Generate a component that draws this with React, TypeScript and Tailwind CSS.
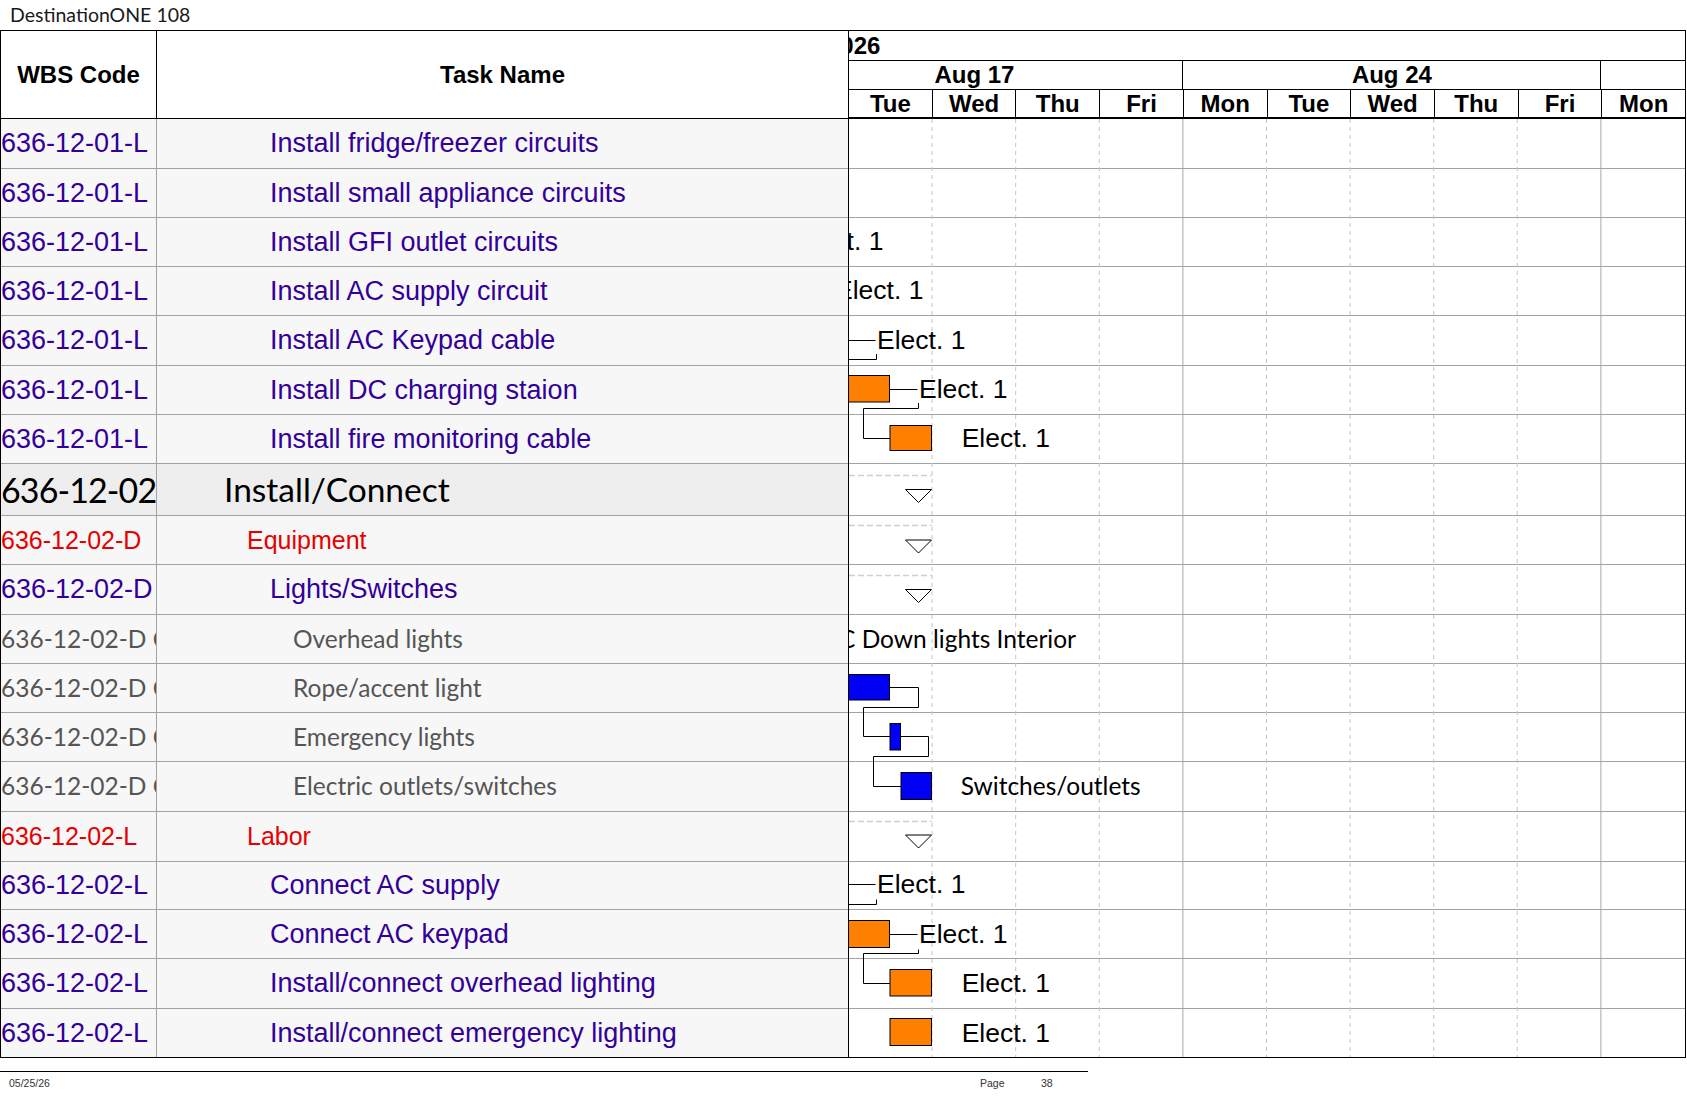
import React from "react";

type Kind = "task" | "summary" | "red" | "gray";

type Row = { wbs: string; name: string; kind: Kind; h: number };

const rows: Row[] = [
  { wbs: "636-12-01-L", name: "Install fridge/freezer circuits", kind: "task", h: 50 },
  { wbs: "636-12-01-L", name: "Install small appliance circuits", kind: "task", h: 49 },
  { wbs: "636-12-01-L", name: "Install GFI outlet circuits", kind: "task", h: 49 },
  { wbs: "636-12-01-L", name: "Install AC supply circuit", kind: "task", h: 49 },
  { wbs: "636-12-01-L", name: "Install AC Keypad cable", kind: "task", h: 50 },
  { wbs: "636-12-01-L", name: "Install DC charging staion", kind: "task", h: 49 },
  { wbs: "636-12-01-L", name: "Install fire monitoring cable", kind: "task", h: 49 },
  { wbs: "636-12-02", name: "Install/Connect", kind: "summary", h: 52 },
  { wbs: "636-12-02-D", name: "Equipment", kind: "red", h: 49 },
  { wbs: "636-12-02-D", name: "Lights/Switches", kind: "task", h: 50 },
  { wbs: "636-12-02-D C", name: "Overhead lights", kind: "gray", h: 49 },
  { wbs: "636-12-02-D C", name: "Rope/accent light", kind: "gray", h: 49 },
  { wbs: "636-12-02-D C", name: "Emergency lights", kind: "gray", h: 49 },
  { wbs: "636-12-02-D C", name: "Electric outlets/switches", kind: "gray", h: 50 },
  { wbs: "636-12-02-L", name: "Labor", kind: "red", h: 50 },
  { wbs: "636-12-02-L", name: "Connect AC supply", kind: "task", h: 48 },
  { wbs: "636-12-02-L", name: "Connect AC keypad", kind: "task", h: 49 },
  { wbs: "636-12-02-L", name: "Install/connect overhead lighting", kind: "task", h: 50 },
  { wbs: "636-12-02-L", name: "Install/connect emergency lighting", kind: "task", h: 49 },
];

const wbsClass: Record<Kind, string> = {
  task: "font-['Liberation_Sans',Arial,sans-serif] text-[27px] text-[#330099]",
  summary: "font-['Lato',sans-serif] text-[34px] tracking-[-0.9px] text-black",
  red: "font-['Liberation_Sans',Arial,sans-serif] text-[25px] text-[#e60000]",
  gray: "font-['Lato',sans-serif] text-[24.5px] text-[#555555]",
};

const nameClass: Record<Kind, string> = {
  task: "pl-[113px] font-['Liberation_Sans',Arial,sans-serif] text-[27px] text-[#330099]",
  summary: "pl-[67px] font-['Lato',sans-serif] text-[33.5px] text-black",
  red: "pl-[90px] font-['Liberation_Sans',Arial,sans-serif] text-[25px] text-[#e60000]",
  gray: "pl-[136px] font-['Lato',sans-serif] text-[24.5px] text-[#555555]",
};

const days = ["Tue", "Wed", "Thu", "Fri", "Mon", "Tue", "Wed", "Thu", "Fri", "Mon"];

// chart body origin on the page
const X0 = 849;
const Y0 = 119;
const DAY = 83.6;

const labels = [
  { x: 795, cy: 241.5, text: "Elect. 1", calibri: false },
  { x: 835, cy: 290.5, text: "Elect. 1", calibri: false },
  { x: 877, cy: 340, text: "Elect. 1", calibri: false },
  { x: 919, cy: 389.5, text: "Elect. 1", calibri: false },
  { x: 961.7, cy: 438.5, text: "Elect. 1", calibri: false },
  { x: 839, cy: 639, text: "C Down lights Interior", calibri: true },
  { x: 960.7, cy: 786, text: "Switches/outlets", calibri: true },
  { x: 877, cy: 884.5, text: "Elect. 1", calibri: false },
  { x: 919, cy: 934, text: "Elect. 1", calibri: false },
  { x: 961.7, cy: 983, text: "Elect. 1", calibri: false },
  { x: 961.7, cy: 1033, text: "Elect. 1", calibri: false },
];

const bars = [
  { x1: 845, x2: 889.5, y1: 375.5, y2: 402, fill: "#ff8000" },
  { x1: 890, x2: 931.5, y1: 425.5, y2: 450.5, fill: "#ff8000" },
  { x1: 845, x2: 889.5, y1: 674.5, y2: 700, fill: "#0000f5" },
  { x1: 890, x2: 900.5, y1: 723.5, y2: 750, fill: "#0000f5" },
  { x1: 901, x2: 931.5, y1: 772.5, y2: 799.5, fill: "#0000f5" },
  { x1: 845, x2: 889.5, y1: 920.5, y2: 947.5, fill: "#ff8000" },
  { x1: 890, x2: 931.5, y1: 969.5, y2: 996, fill: "#ff8000" },
  { x1: 890, x2: 931.5, y1: 1018.5, y2: 1045.5, fill: "#ff8000" },
];

const links = [
  "845,340.5 875.5,340.5",
  "845,359.5 876.5,359.5 876.5,354",
  "889.5,389.5 917.5,389.5",
  "918.5,403 918.5,408.5 863.5,408.5 863.5,438.5 890,438.5",
  "889.5,687.5 918.5,687.5 918.5,707.5 863.5,707.5 863.5,736.5 890,736.5",
  "900.5,736.5 928.5,736.5 928.5,756.5 873.5,756.5 873.5,786.5 901,786.5",
  "845,884.5 875.5,884.5",
  "845,904.5 876.5,904.5 876.5,899.5",
  "889.5,934.5 917.5,934.5",
  "918.5,949.5 918.5,953.5 863.5,953.5 863.5,983.5 890,983.5",
];

const summaries = [475.5, 525.5, 575.5, 821.5];
const triangles = [
  { top: 489.5, bottom: 502.5 },
  { top: 540, bottom: 553 },
  { top: 589.5, bottom: 602.5 },
  { top: 835, bottom: 848 },
];

function ChartOverlay() {
  const gridX = Array.from({ length: 9 }, (_, i) => X0 + DAY * (i + 1) - 0.5);
  return (
    <svg
      className="absolute left-0 top-0 pointer-events-none"
      width={836}
      height={939}
    >
      <g transform={`translate(${-X0} ${-Y0})`}>
        {gridX.map((x, i) =>
          i === 3 || i === 8 ? (
            <line key={i} x1={x} x2={x} y1={Y0} y2={1057} stroke="#a8a8a8" strokeWidth={1} />
          ) : (
            <line
              key={i}
              x1={x}
              x2={x}
              y1={Y0}
              y2={1057}
              stroke="#c4c4c4"
              strokeWidth={1}
              strokeDasharray="4 4"
            />
          )
        )}
        {summaries.map((y, i) => (
          <line key={i} x1={849} x2={932} y1={y} y2={y} stroke="#cfcfcf" strokeWidth={1.5} strokeDasharray="6 3" />
        ))}
        {triangles.map((t, i) => (
          <polygon
            key={i}
            points={`905.5,${t.top} 931.5,${t.top} 918.5,${t.bottom}`}
            fill="white"
            stroke="black"
            strokeWidth={1}
          />
        ))}
        {links.map((p, i) => (
          <polyline key={i} points={p} fill="none" stroke="black" strokeWidth={1} />
        ))}
        {bars.map((b, i) => (
          <rect
            key={i}
            x={b.x1}
            y={b.y1}
            width={b.x2 - b.x1}
            height={b.y2 - b.y1}
            fill={b.fill}
            stroke="black"
            strokeWidth={1}
          />
        ))}
      </g>
    </svg>
  );
}

export default function App() {
  return (
    <div className="w-[1687px] h-[1097px] bg-white overflow-hidden text-black">
      {/* TITLE */}
      <div className="h-[30px] flex items-center pl-[10px] font-['Lato',sans-serif] text-[19.5px] text-[#1a1a1a]">
        DestinationONE 108
      </div>

      {/* TABLE */}
      <div className="flex border-t border-black w-[1686px]">
        {/* left: WBS + task name */}
        <div className="w-[848px] shrink-0 border-l border-black flex flex-col">
          <div className="h-[88px] flex border-b border-black font-['Liberation_Sans',Arial,sans-serif] font-bold text-[24px]">
            <div className="w-[156px] shrink-0 border-r border-black flex items-center justify-center">
              WBS Code
            </div>
            <div className="flex-1 flex items-center justify-center">Task Name</div>
          </div>
          {rows.map((r, i) => (
            <div
              key={i}
              style={{ height: r.h }}
              className={
                i === rows.length - 1
                  ? "flex border-b border-black " + (r.kind === "summary" ? "bg-[#eeeeee]" : "bg-[#f7f7f7]")
                  : "flex border-b border-[#a3a3a3] " + (r.kind === "summary" ? "bg-[#eeeeee]" : "bg-[#f7f7f7]")
              }
            >
              <div
                className={
                  "w-[156px] shrink-0 border-r border-[#a3a3a3] flex items-center overflow-hidden whitespace-nowrap leading-none " +
                  wbsClass[r.kind]
                }
              >
                {r.wbs}
              </div>
              <div
                className={
                  "flex-1 flex items-center overflow-hidden whitespace-nowrap leading-none " + nameClass[r.kind]
                }
              >
                {r.name}
              </div>
            </div>
          ))}
        </div>

        {/* right: gantt chart */}
        <div className="w-[838px] shrink-0 border-l border-r border-black flex flex-col overflow-hidden font-['Liberation_Sans',Arial,sans-serif]">
          <div className="h-[88px] flex flex-col border-b-2 border-black font-bold text-[24px] leading-none">
            <div className="h-[30px] border-b border-black flex items-center overflow-hidden whitespace-nowrap">
              <span className="-ml-[22px]">2026</span>
            </div>
            <div className="h-[29px] border-b border-black flex">
              <div className="w-[334.4px] shrink-0 border-r border-black flex items-center overflow-hidden">
                <div className="w-[418px] shrink-0 -ml-[83.6px] text-center">Aug 17</div>
              </div>
              <div className="w-[418px] shrink-0 border-r border-black flex items-center justify-center">
                Aug 24
              </div>
              <div className="flex-1" />
            </div>
            <div className="flex-1 flex">
              {days.map((d, i) => (
                <div
                  key={i}
                  className={
                    i === days.length - 1
                      ? "flex-1 flex items-center justify-center"
                      : "flex-1 flex items-center justify-center border-r border-black"
                  }
                >
                  {d}
                </div>
              ))}
            </div>
          </div>

          <div className="relative flex flex-col">
            {rows.map((r, i) => (
              <div
                key={i}
                style={{ height: r.h }}
                className={i === rows.length - 1 ? "border-b border-black" : "border-b border-[#a3a3a3]"}
              />
            ))}
            <ChartOverlay />
            {labels.map((l, i) => (
              <div
                key={i}
                style={{ left: l.x - X0, top: l.cy - Y0 - 15 }}
                className={
                  l.calibri
                    ? "absolute h-[30px] flex items-center whitespace-nowrap leading-none font-['Lato',sans-serif] text-[24.5px] text-black"
                    : "absolute h-[30px] flex items-center whitespace-nowrap leading-none font-['Liberation_Sans',Arial,sans-serif] text-[26.5px] text-black"
                }
              >
                {l.text}
              </div>
            ))}
          </div>
        </div>
      </div>

      {/* FOOTER */}
      <div className="mt-[13px] w-[1088px] border-t border-black">
        <div className="h-[24px] flex items-center pl-[9px] font-['Liberation_Sans',Arial,sans-serif] text-[10.5px] text-[#333333]">
          <span className="w-[971px] shrink-0">05/25/26</span>
          <span className="w-[61px] shrink-0">Page</span>
          <span>38</span>
        </div>
      </div>
    </div>
  );
}
